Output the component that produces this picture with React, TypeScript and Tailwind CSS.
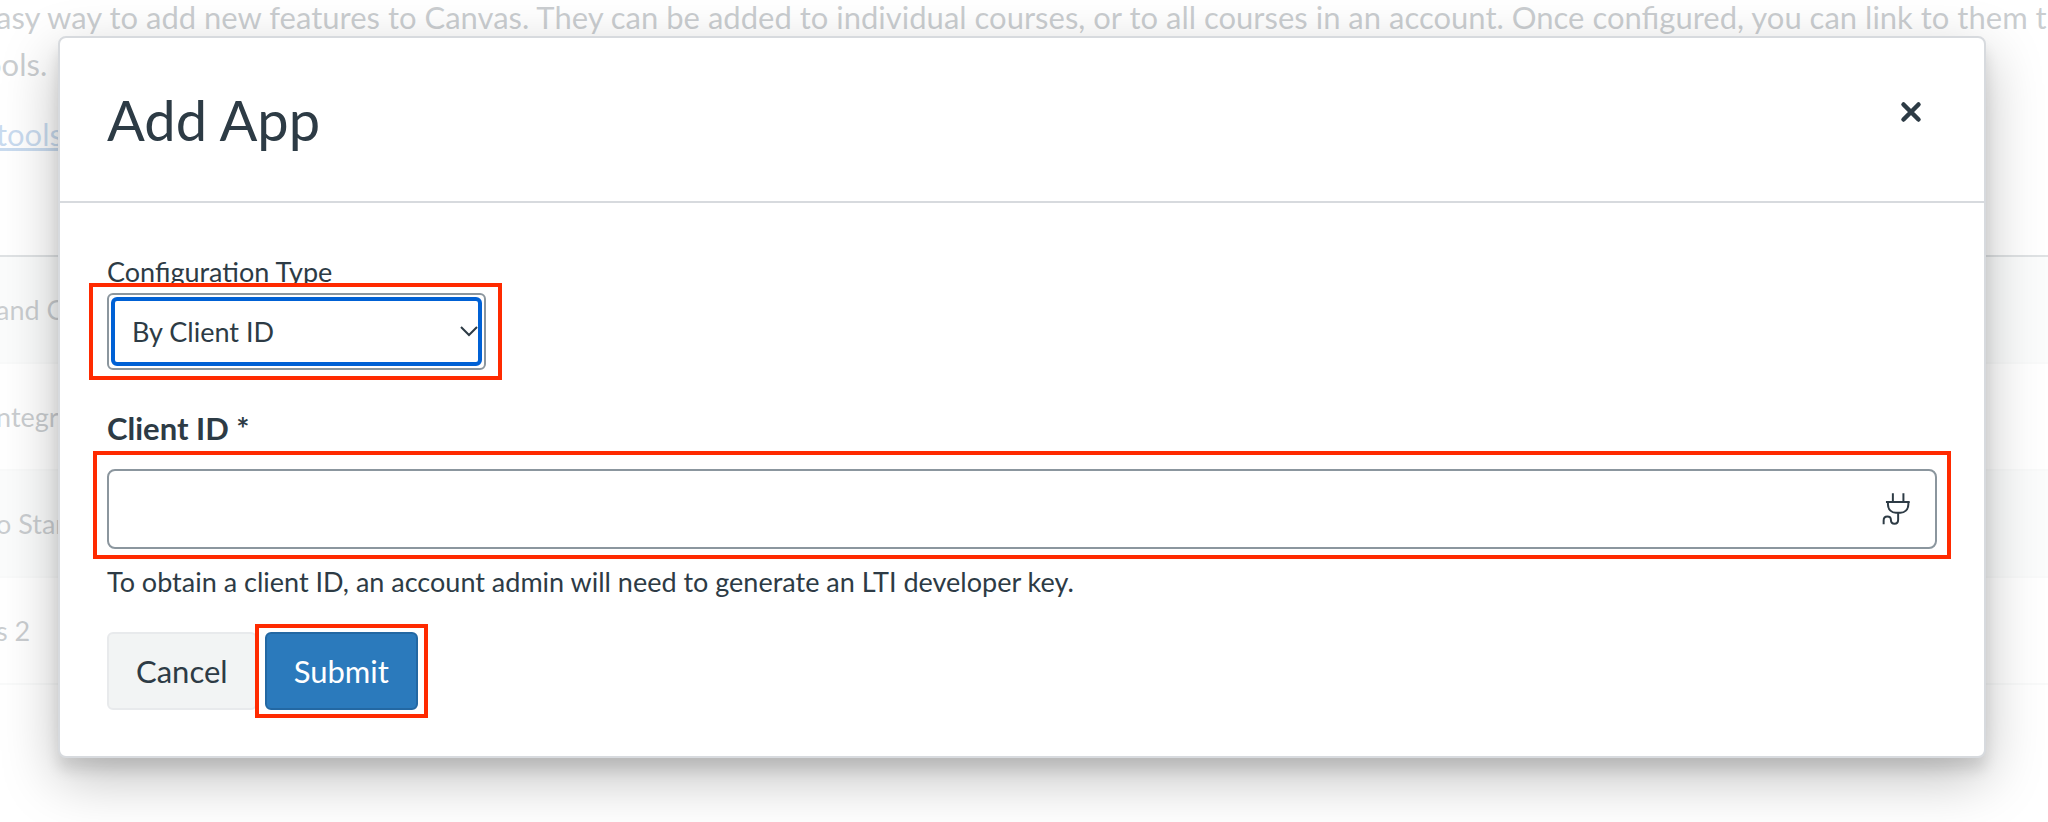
import React, { useState } from "react";

const tools = ["and Collaborate", "ntegration", "o Starter", "s 2"];

function Highlight({ className }: { className: string }) {
  return <span aria-hidden="true" className={`absolute border-4 border-[#ff2a00] pointer-events-none ${className}`}></span>;
}

function PlugIcon() {
  return (
    <svg width="29" height="33" viewBox="66 65 88 100" fill="none" stroke="#2d3b45" strokeWidth="6" aria-hidden="true" className="shrink-0">
      <path d="M99 66v25M131 66v25M78 92h72" />
      <path d="M84 92v8c0 16 12 25 24 25h14c12 0 24-9 24-25v-8" />
      <path d="M115 125v21c0 8-4 12-11 12s-11-5-11-12c0-6-4-10-11-10s-11 5-11 12v12" />
    </svg>
  );
}

export default function App() {
  const [configType, setConfigType] = useState('client_id');
  const [clientId, setClientId] = useState('');

  return (
    <div className="relative min-h-screen overflow-hidden bg-white text-[#2d3b45] font-[Lato,sans-serif]">
      {/* Page behind the dialog */}
      <main className="-mt-1.5 -ml-1 whitespace-nowrap text-[31px] leading-[47px]">
        <p className="-ml-3 indent-3">
          asy way to add new features to Canvas. They can be added to individual courses, or to all courses in an account. Once configured, you can link to them through
          <br />
          ools.
        </p>
        <p className="mt-[23px]">
          <a href="#tools" className="text-[#2b6fbf] underline">tools</a>
        </p>
        <table className="mt-[97px] w-full border-t-2 border-[#7f8a92] text-[27px] leading-9">
          <tbody>
            {tools.map((tool) => (
              <tr key={tool} className="h-[107px] border-b-2 border-[#e8eaec] odd:bg-[#f0f4f3]">
                <td>{tool}</td>
              </tr>
            ))}
          </tbody>
        </table>
      </main>

      {/* Mask + dialog */}
      <div className="absolute inset-0 bg-white/75 pt-9 pl-[58px] pr-[62px]">
        <div role="dialog" aria-labelledby="dialog-title" className="rounded-lg border-2 border-[#d7dade] bg-white shadow-[0_12px_14px_rgba(0,0,0,0.1),0_20px_56px_rgba(0,0,0,0.25)]">
          <header className="flex items-start justify-between border-b-2 border-[#d7dade] px-[47px] pt-12 pb-[47px]">
            <h1 id="dialog-title" className="text-[56px] leading-[68px]">Add App</h1>
            <button type="button" aria-label="Close" className="mt-2 mr-2 p-1 cursor-pointer">
              <svg width="28" height="28" viewBox="0 0 28 28" stroke="#2d3b45" strokeWidth="4.5" strokeLinecap="round" aria-hidden="true">
                <path d="M6.5 6.5l15 15M21.5 6.5l-15 15" />
              </svg>
            </button>
          </header>

          <form onSubmit={e => e.preventDefault()} className="px-[47px] pt-[51px] pb-[46px]">
            <label htmlFor="config-type" className="block text-[27px] leading-9">Configuration Type</label>
            <div className="relative mt-[3px] w-[379px] rounded-md border-2 border-[#8b969e] p-0.5">
              <select id="config-type" value={configType} onChange={e => setConfigType(e.target.value)} className="block h-[69px] w-full appearance-none rounded-md border-4 border-[#0061d5] bg-white px-[17px] text-[27px] leading-9 outline-none">
                <option value="client_id">By Client ID</option>
                <option value="manual">Manual Entry</option>
                <option value="url">By URL</option>
                <option value="xml">Paste XML</option>
              </select>
              <svg width="18" height="12" viewBox="0 0 18 12" fill="none" stroke="#2d3b45" strokeWidth="2" aria-hidden="true" className="absolute right-1.5 top-[31px] pointer-events-none">
                <path d="M1 1l8 8 8-8" />
              </svg>
              <Highlight className="-left-5 -right-[18px] -top-3 -bottom-3" />
            </div>

            <label htmlFor="client-id" className="mt-[38px] block text-[31px] leading-10 font-bold">Client ID *</label>
            <div className="relative mt-[21px] flex h-20 items-center rounded-lg border-2 border-[#8b969e] pr-6">
              <input id="client-id" type="text" required value={clientId} onChange={e => setClientId(e.target.value)} className="h-full min-w-0 flex-1 bg-transparent px-6 text-[31px] outline-none" />
              <PlugIcon />
              <Highlight className="-left-4 -right-4 -top-5 -bottom-3" />
            </div>
            <p className="mt-[15px] text-[27px] leading-9">To obtain a client ID, an account admin will need to generate an LTI developer key.</p>

            <div className="mt-8 flex gap-2 text-[31px] leading-10">
              <button type="button" className="h-[78px] rounded-md border-2 border-[#e8eaec] bg-[#f2f4f4] px-[27px] cursor-pointer">Cancel</button>
              <div className="relative">
                <button type="submit" className="h-[78px] rounded-md border-2 border-[#2368a3] bg-[#2b7abc] px-[27px] text-white cursor-pointer">Submit</button>
                <Highlight className="-inset-x-2.5 -inset-y-2" />
              </div>
            </div>
          </form>
        </div>
      </div>
    </div>
  );
}
